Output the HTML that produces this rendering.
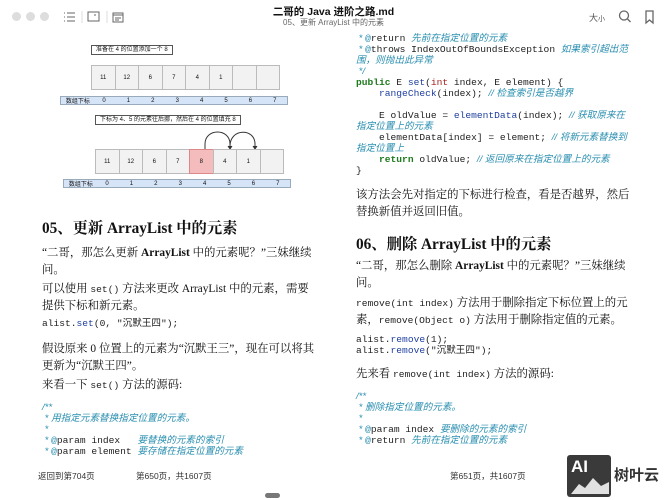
<!DOCTYPE html>
<html><head><meta charset="utf-8"><style>
*{margin:0;padding:0;box-sizing:border-box}
body{width:667px;height:500px;background:#fff;position:relative;overflow:hidden;font-family:"Liberation Serif","Noto Serif CJK SC",serif;color:#111}
.a{position:absolute;white-space:nowrap}
.c{font-family:"Liberation Mono","Noto Sans CJK SC",monospace;font-size:9.6px;line-height:11px;color:#222;white-space:pre}
.cm{color:#2a8fb0;font-style:italic;font-family:"Liberation Sans","Noto Sans CJK SC",sans-serif}
.at{color:#2a8fb0}
.k{color:#1e7a1e;font-weight:bold}
.f{color:#1f3fa0}
.t{font-size:11.4px;line-height:16.5px}
.t .c{font-size:9.6px}
h2{position:absolute;font-size:15.3px;font-weight:bold;white-space:nowrap}
.s{font-family:"Liberation Sans","Noto Sans CJK SC",sans-serif}
.cells{position:absolute;display:flex}
.cells div{width:24.5px;height:25px;border:1px solid #bbb;margin-right:-1px;background:#f2f2f2;font:6px "Liberation Sans",sans-serif;display:flex;align-items:center;justify-content:center}
.idx{position:absolute;height:9px;background:#d6e4f7;border:1px solid #9ab;font:6px "Liberation Sans","Noto Sans CJK SC",sans-serif;display:flex;align-items:center}
.idx span{width:24.5px;text-align:center}
.lbl{position:absolute;border:1px solid #555;font:6px "Liberation Sans","Noto Sans CJK SC",sans-serif;padding:0 4px;line-height:8px;background:#fff}
</style></head><body>
<div class="a" style="left:12px;top:12px;width:9px;height:9px;border-radius:50%;background:#ddd"></div>
<div class="a" style="left:26px;top:12px;width:9px;height:9px;border-radius:50%;background:#ddd"></div>
<div class="a" style="left:40px;top:12px;width:9px;height:9px;border-radius:50%;background:#ddd"></div>
<svg class="a" style="left:62px;top:10px" width="64" height="14"><g stroke="#666" fill="none" stroke-width="1"><path d="M2 3h1M5 3h8M2 7h1M5 7h8M2 11h1M5 11h8"/><line x1="20" y1="1" x2="20" y2="13" stroke="#ddd"/><rect x="26" y="2" width="11" height="9"/><path d="M33 4v2"/><line x1="45" y1="1" x2="45" y2="13" stroke="#ddd"/><rect x="51" y="3" width="10" height="9"/><path d="M51 5h10M53 8h6M53 10h4"/></g></svg>
<div class="a s" style="left:0;width:667px;top:4px;text-align:center;font-size:10.5px;font-weight:bold">二哥的 Java 进阶之路.md</div>
<div class="a s" style="left:0;width:667px;top:17px;text-align:center;font-size:8px;color:#666">05、更新 ArrayList 中的元素</div>
<div class="a s" style="left:589px;top:11px;font-size:9px;color:#555">大<small style="font-size:7px">小</small></div>
<svg class="a" style="left:617px;top:9px" width="40" height="16"><g stroke="#666" fill="none" stroke-width="1.3"><circle cx="7" cy="6.5" r="4.5"/><path d="M10.5 10l3 3"/><path d="M29 2h7v12l-3.5-3-3.5 3z"/></g></svg>
<div class="lbl" style="left:91px;top:45px">准备在 4 的位置添加一个 8</div>
<div class="cells" style="left:91px;top:65px"><div>11</div><div>12</div><div>6</div><div>7</div><div>4</div><div>1</div><div></div><div></div></div>
<div class="idx" style="left:60px;top:96px;width:228px"><span style="width:31px;padding-left:3px">数组下标</span><span>0</span><span>1</span><span>2</span><span>3</span><span>4</span><span>5</span><span>6</span><span>7</span></div>
<div class="lbl" style="left:95px;top:115px">下标为 4、5 的元素往后挪，然后在 4 的位置填充 8</div>
<svg class="a" style="left:195px;top:128px" width="70" height="24"><g stroke="#333" fill="none" stroke-width="1"><path d="M10 22V16C10 0 35 0 35 16V20M35 18C35 0 60 0 60 16V20"/><path d="M33 18l2 3 2-3M58 18l2 3 2-3" fill="#333"/></g></svg>
<div class="cells" style="left:95px;top:149px"><div>11</div><div>12</div><div>6</div><div>7</div><div style="background:#f4bcbc;border-color:#d88">8</div><div>4</div><div>1</div><div></div></div>
<div class="idx" style="left:63px;top:179px;width:228px"><span style="width:31px;padding-left:3px">数组下标</span><span>0</span><span>1</span><span>2</span><span>3</span><span>4</span><span>5</span><span>6</span><span>7</span></div>

<h2 style="left:42px;top:216px">05、更新 ArrayList 中的元素</h2>
<div class="a t" style="left:42px;top:245px">“二哥，那怎么更新 <b>ArrayList</b> 中的元素呢？”三妹继续<br>问。</div>
<div class="a t" style="left:42px;top:281px">可以使用 <span class="c">set()</span> 方法来更改 ArrayList 中的元素，需要<br>提供下标和新元素。</div>
<div class="a c" style="left:42px;top:318px">alist.<span class="f">set</span>(0, "沉默王四");</div>
<div class="a t" style="left:42px;top:341px">假设原来 0 位置上的元素为“沉默王三”，现在可以将其<br>更新为“沉默王四”。</div>
<div class="a t" style="left:42px;top:377px">来看一下 <span class="c">set()</span> 方法的源码:</div>
<div class="a c" style="left:42px;top:402px"><span class="cm">/**</span>
<span class="cm"> * 用指定元素替换指定位置的元素。</span>
<span class="cm"> *</span>
<span class="cm"> * </span><span class="at">@</span>param index   <span class="cm">要替换的元素的索引</span>
<span class="cm"> * </span><span class="at">@</span>param element <span class="cm">要存储在指定位置的元素</span></div>

<div class="a c" style="left:356px;top:33px"><span class="cm"> * </span><span class="at">@</span>return <span class="cm">先前在指定位置的元素</span>
<span class="cm"> * </span><span class="at">@</span>throws IndexOutOfBoundsException <span class="cm">如果索引超出范</span>
<span class="cm">围，则抛出此异常</span>
<span class="cm"> */</span>
<span class="k">public</span> E <span class="f">set</span>(<span style="color:#a22">int</span> index, E element) {
    <span class="f">rangeCheck</span>(index); <span class="cm">// 检查索引是否越界</span>

    E oldValue = <span class="f">elementData</span>(index); <span class="cm">// 获取原来在</span>
<span class="cm">指定位置上的元素</span>
    elementData[index] = element; <span class="cm">// 将新元素替换到</span>
<span class="cm">指定位置上</span>
    <span class="k">return</span> oldValue; <span class="cm">// 返回原来在指定位置上的元素</span>
}</div>
<div class="a t" style="left:356px;top:187px">该方法会先对指定的下标进行检查，看是否越界，然后<br>替换新值并返回旧值。</div>
<h2 style="left:356px;top:232px">06、删除 ArrayList 中的元素</h2>
<div class="a t" style="left:356px;top:258px">“二哥，那怎么删除 <b>ArrayList</b> 中的元素呢？”三妹继续<br>问。</div>
<div class="a t" style="left:356px;top:295px"><span class="c">remove(int index)</span> 方法用于删除指定下标位置上的元<br>素，<span class="c">remove(Object o)</span> 方法用于删除指定值的元素。</div>
<div class="a c" style="left:356px;top:334px">alist.<span class="f">remove</span>(1);
alist.<span class="f">remove</span>("沉默王四");</div>
<div class="a t" style="left:356px;top:366px">先来看 <span class="c">remove(int index)</span> 方法的源码:</div>
<div class="a c" style="left:356px;top:391px"><span class="cm">/**</span>
<span class="cm"> * 删除指定位置的元素。</span>
<span class="cm"> *</span>
<span class="cm"> * </span><span class="at">@</span>param index <span class="cm">要删除的元素的索引</span>
<span class="cm"> * </span><span class="at">@</span>return <span class="cm">先前在指定位置的元素</span></div>

<div class="a s" style="left:38px;top:470px;font-size:8.5px;color:#333">返回到第704页</div>
<div class="a s" style="left:136px;top:470px;font-size:8.5px;color:#333">第650页，共1607页</div>
<div class="a s" style="left:450px;top:470px;font-size:8.5px;color:#333">第651页，共1607页</div>
<div class="a" style="left:265px;top:493px;width:15px;height:5px;border-radius:3px;background:#777"></div>
<div class="a" style="left:567px;top:455px;width:44px;height:42px;background:#3a3a3a;border-radius:3px"></div>
<div class="a s" style="left:571px;top:457px;font-size:17px;font-weight:bold;color:#fff">AI</div>
<svg class="a" style="left:571px;top:474px" width="38" height="20"><path d="M0 20L8 10 14 14 22 4 30 12 38 8V20Z" fill="#fff" opacity=".85"/></svg>
<div class="a s" style="left:614px;top:464px;font-size:15px;font-weight:bold;color:#333">树叶云</div>
</body></html>
